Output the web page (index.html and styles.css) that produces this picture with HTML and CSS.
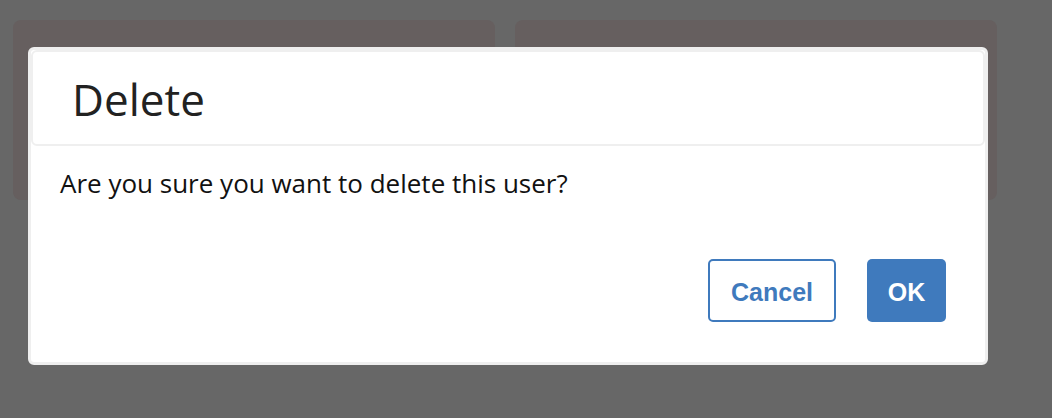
FILE: index.html
```html
<!DOCTYPE html>
<html>
<head>
<meta charset="utf-8">
<link rel="stylesheet" href="styles.css">
</head>
<body>
<div class="page">
  <div class="card"></div>
  <div class="card"></div>
</div>
<div class="modal">
  <div class="modal-header">
    <h2 class="modal-title">Delete</h2>
  </div>
  <div class="modal-body">
    <p class="message">Are you sure you want to delete this user?</p>
  </div>
  <div class="modal-footer">
    <button class="btn btn-outline">Cancel</button>
    <button class="btn btn-primary">OK</button>
  </div>
</div>
</body>
</html>
```
FILE: styles.css
```css
html, body {
  margin: 0;
  padding: 0;
}
body {
  background: #676767;
  width: 1052px;
  height: 418px;
  overflow: hidden;
  position: relative;
  font-family: "Open Sans", "Noto Sans", sans-serif;
}
.page {
  display: flex;
  gap: 20px;
  padding: 20px 0 0 13px;
}
.card {
  width: 482px;
  height: 180px;
  background: #665f5f;
  border-radius: 8px;
}
.modal {
  position: absolute;
  left: 28px;
  top: 47px;
  width: 960px;
  height: 318px;
  box-sizing: border-box;
  background: #fff;
  border: 3px solid #efefef;
  border-radius: 6px;
  display: flex;
  flex-direction: column;
}
.modal-header {
  height: 96px;
  box-sizing: border-box;
  border: 2px solid #efefef;
  border-radius: 6px;
  display: flex;
  align-items: center;
  padding: 2px 0 0 39px;
}
.modal-title {
  margin: 0;
  font-weight: 400;
  font-size: 44px;
  color: #222;
  line-height: 1;
}
.modal-body {
  padding: 20px 29px 0;
}
.message {
  margin: 0;
  font-size: 26px;
  line-height: 34px;
  color: #111;
}
.modal-footer {
  margin-top: auto;
  display: flex;
  justify-content: flex-end;
  gap: 31px;
  padding: 0 39px 40px 0;
}
.btn {
  height: 63px;
  box-sizing: border-box;
  border-radius: 5px;
  font-family: "Liberation Sans", Arial, sans-serif;
  font-weight: 700;
  font-size: 25px;
  padding: 4px 0 0;
  cursor: pointer;
}
.btn-outline {
  width: 128px;
  background: #fff;
  border: 2px solid #3f7abd;
  color: #3f7abd;
}
.btn-primary {
  width: 79px;
  background: #3f7abd;
  border: none;
  color: #fff;
}
```
